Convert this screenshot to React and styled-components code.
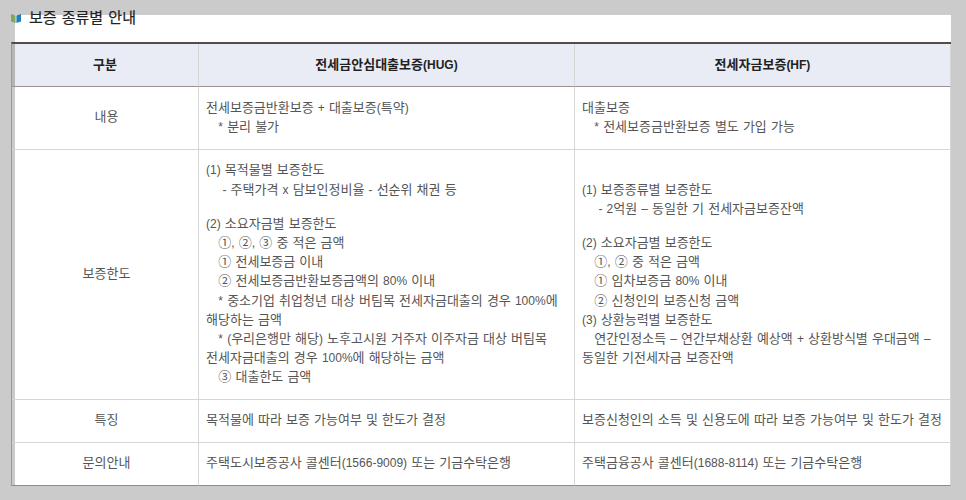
import React from "react";
import styled, { createGlobalStyle } from "styled-components";

const Global = createGlobalStyle`
  html, body { margin: 0; padding: 0; background: #cbcbcb; }
  body { font-family: "Liberation Sans", "Noto Sans CJK KR", sans-serif; overflow: hidden; }
`;
const Page = styled.div`
  width: 966px; height: 500px; box-sizing: border-box; padding: 15px 15px 0 15px;
`;
const Panel = styled.div`
  display: flow-root; width: 936px; height: 470px; background: #fff;
`;
const Heading = styled.h3`
  display: flex; align-items: center; gap: 8px; margin: -7px 0 0 -4px; height: 20px;
  font-size: 15px; line-height: 20px; font-weight: 400; color: #222; word-spacing: 1px;
  -webkit-text-stroke: 0.2px #222;
`;
const Table = styled.table`
  margin: 14px 0 0 -4px; width: 940px; border-collapse: separate; border-spacing: 0; table-layout: fixed;
  border-top: 2px solid #554b4b; border-left: 1px solid #999;
  font-size: 13px; line-height: 19.2px; color: #555; word-spacing: 0.5px; word-break: keep-all;
`;
const Th = styled.th`
  height: 42px; padding: 0; color: #222; font-size: 13px; font-weight: 700; text-align: center;
  background: ${p => p.$first ? "linear-gradient(90deg, #b6b6b6 3px, #e9ecf5 3px)" : "#e9ecf5"};
  border-right: 1px solid #d6d6d6; border-bottom: 1px solid #9a9292;
`;
const Label = styled.td`
  padding: 0 0 2px 3px; text-align: center; vertical-align: middle; border-right: 1px solid #d6d6d6;
  border-bottom: 1px solid ${p => p.$last ? "#8c8c8c" : "#d6d6d6"};
`;
const Cell = styled.td`
  padding: 0 7px 2px; vertical-align: middle; border-right: 1px solid #d6d6d6;
  border-bottom: 1px solid ${p => p.$last ? "#8c8c8c" : "#d6d6d6"};
`;
const Row = styled.tr`height: ${p => p.$h}px;`;
const Gap = styled.div`height: 15px;`;
const Line = styled.div`white-space: pre-wrap;`;
const Latin = styled.span`font-size: 12px; line-height: 1;`;

function T({ children }) {
  return children.split(/([A-Za-z0-9()%+\-–*.,]+)/).map((part, i) =>
    i % 2 ? <Latin key={i}>{part}</Latin> : part
  );
}

function Lines({ items }) {
  return items.map((text, i) => <Line key={i}><T>{text}</T></Line>);
}

function Book() {
  return (
    <svg width="10" height="10" viewBox="0 0 10 10">
      <path d="M0 1 L4.6 2.5 V10 L0 8.5 Z" fill="#7fa85a" />
      <path d="M5.4 2.5 L10 1 V8.5 L5.4 10 Z" fill="#1f7fb8" />
    </svg>
  );
}

export default function App() {
  return (
    <Page>
      <Global />
      <Panel>
        <Heading><Book />보증 종류별 안내</Heading>
        <Table>
          <colgroup><col style={{ width: 187 }} /><col style={{ width: 376 }} /><col style={{ width: 376 }} /></colgroup>
          <thead>
            <tr><Th $first>구분</Th><Th><T>전세금안심대출보증(HUG)</T></Th><Th><T>전세자금보증(HF)</T></Th></tr>
          </thead>
          <tbody>
            <Row $h={63}>
              <Label>내용</Label>
              <Cell><Lines items={["전세보증금반환보증 + 대출보증(특약)", "   * 분리 불가"]} /></Cell>
              <Cell><Lines items={["대출보증", "   * 전세보증금반환보증 별도 가입 가능"]} /></Cell>
            </Row>
            <Row $h={250}>
              <Label>보증한도</Label>
              <Cell>
                <Lines items={["(1) 목적물별 보증한도", "    - 주택가격 x 담보인정비율 - 선순위 채권 등"]} />
                <Gap />
                <Lines items={[
                  "(2) 소요자금별 보증한도",
                  "   ①, ②, ③ 중 적은 금액",
                  "   ① 전세보증금 이내",
                  "   ② 전세보증금반환보증금액의 80% 이내",
                  "   * 중소기업 취업청년 대상 버팀목 전세자금대출의 경우 100%에",
                  "해당하는 금액",
                  "   * (우리은행만 해당) 노후고시원 거주자 이주자금 대상 버팀목",
                  "전세자금대출의 경우 100%에 해당하는 금액",
                  "   ③ 대출한도 금액",
                ]} />
              </Cell>
              <Cell>
                <Lines items={["(1) 보증종류별 보증한도", "    - 2억원 – 동일한 기 전세자금보증잔액"]} />
                <Gap />
                <Lines items={[
                  "(2) 소요자금별 보증한도",
                  "   ①, ② 중 적은 금액",
                  "   ① 임차보증금 80% 이내",
                  "   ② 신청인의 보증신청 금액",
                  "(3) 상환능력별 보증한도",
                  "   연간인정소득 – 연간부채상환 예상액 + 상환방식별 우대금액 –",
                  "동일한 기전세자금 보증잔액",
                ]} />
              </Cell>
            </Row>
            <Row $h={43}>
              <Label>특징</Label>
              <Cell><T>목적물에 따라 보증 가능여부 및 한도가 결정</T></Cell>
              <Cell><T>보증신청인의 소득 및 신용도에 따라 보증 가능여부 및 한도가 결정</T></Cell>
            </Row>
            <Row $h={43}>
              <Label $last>문의안내</Label>
              <Cell $last><T>주택도시보증공사 콜센터(1566-9009) 또는 기금수탁은행</T></Cell>
              <Cell $last><T>주택금융공사 콜센터(1688-8114) 또는 기금수탁은행</T></Cell>
            </Row>
          </tbody>
        </Table>
      </Panel>
    </Page>
  );
}
